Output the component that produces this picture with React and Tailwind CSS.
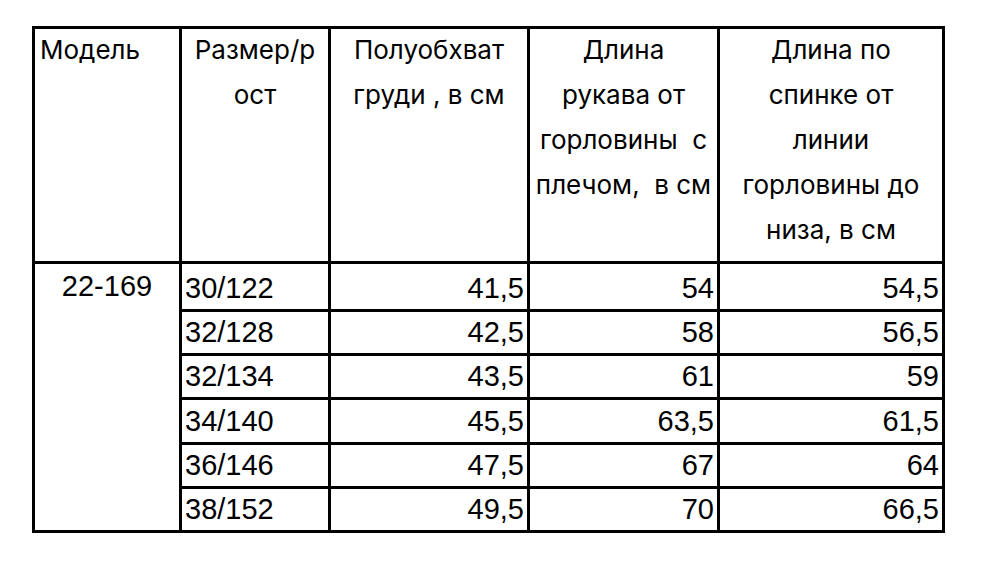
const rows = [
  { size: '30/122', chest: '41,5', sleeve: '54', back: '54,5', h: 'h-[48px]' },
  { size: '32/128', chest: '42,5', sleeve: '58', back: '56,5', h: 'h-[44px]' },
  { size: '32/134', chest: '43,5', sleeve: '61', back: '59', h: 'h-[44px]' },
  { size: '34/140', chest: '45,5', sleeve: '63,5', back: '61,5', h: 'h-[45px]' },
  { size: '36/146', chest: '47,5', sleeve: '67', back: '64', h: 'h-[44px]' },
  { size: '38/152', chest: '49,5', sleeve: '70', back: '66,5', h: 'h-[44px]' },
];

const head = "border-r-[3px] border-b-[3px] border-black font-[family-name:Inter,sans-serif] text-[26px] leading-[45px] text-black whitespace-pre";
const cell = "flex items-end border-r-[3px] border-b-[3px] border-black font-['Liberation_Sans',Arial,sans-serif] text-[29px] leading-[29px] text-black pb-[6px]";

function Head({ className = '', children }) {
  return (
    <div className={`${head} ${className}`}>
      <div className="-mt-[2px]">{children}</div>
    </div>
  );
}

export default function App() {
  return (
    <div className="w-[1000px] h-[569px] bg-white pt-[26px] pl-[32px]">
      <div className="grid grid-cols-[147px_149px_199px_190px_225px] border-l-[3px] border-t-[3px] border-black w-fit">
        <Head className="h-[235px] pl-[5px]">Модель</Head>
        <Head className="text-center">{'Размер/р\nост'}</Head>
        <Head className="text-center">{'Полуобхват\nгруди , в см'}</Head>
        <Head className="text-center">{'Длина\nрукава от\nгорловины  с\nплечом,  в см'}</Head>
        <Head className="text-center">{'Длина по\nспинке от\nлинии\nгорловины до\nниза, в см'}</Head>

        <div className="row-span-6 border-r-[3px] border-b-[3px] border-black pt-[8px] text-center font-['Liberation_Sans',Arial,sans-serif] text-[29px] leading-[29px] text-black">
          22-169
        </div>
        {rows.map((r) => (
          <div key={r.size} className="contents">
            <div className={`${cell} ${r.h} pl-[3px]`}>{r.size}</div>
            <div className={`${cell} ${r.h} justify-end pr-[3px]`}>{r.chest}</div>
            <div className={`${cell} ${r.h} justify-end pr-[3px]`}>{r.sleeve}</div>
            <div className={`${cell} ${r.h} justify-end pr-[3px]`}>{r.back}</div>
          </div>
        ))}
      </div>
    </div>
  );
}
